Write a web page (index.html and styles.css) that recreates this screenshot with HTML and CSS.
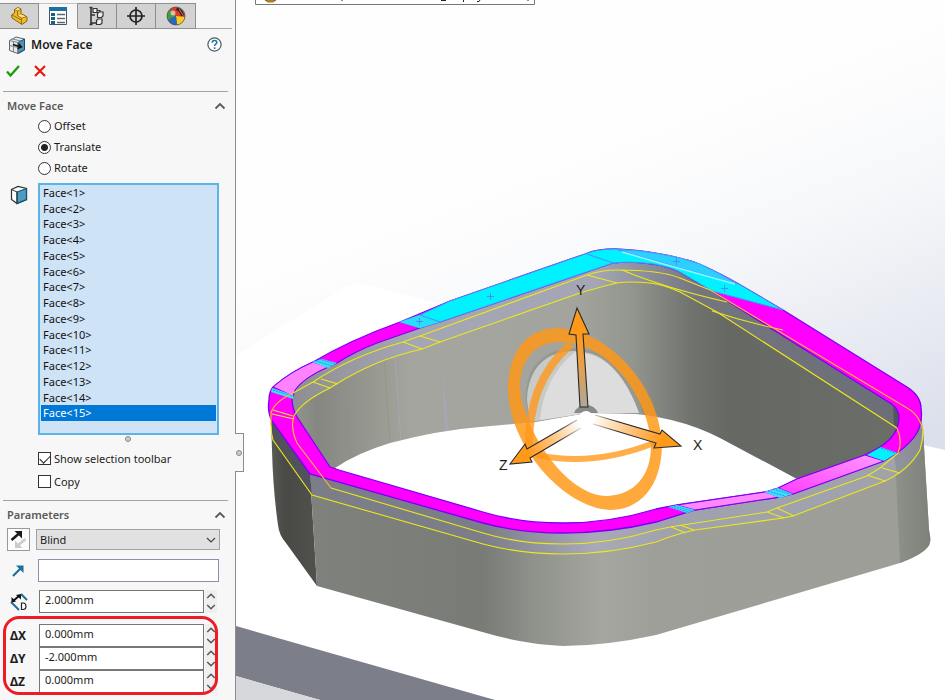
FILE: index.html
```
<!DOCTYPE html>
<html lang="en">
<head>
<meta charset="utf-8">
<title>Move Face</title>
<link rel="stylesheet" href="styles.css">
</head>
<body>
<svg width="0" height="0" class="defs" aria-hidden="true">
  <symbol id="up" viewBox="0 0 12 12"><path d="M1.500 8.500L6 4l4.500 4.500" fill="none" stroke="currentColor" stroke-width="1.800"/></symbol>
  <symbol id="down" viewBox="0 0 12 12"><path d="M1.500 3.500L6 8l4.500-4.500" fill="none" stroke="currentColor" stroke-width="1.800"/></symbol>
</svg>
<aside class="panel">
  <nav class="tabs" aria-label="Managers">
    <button class="tab" aria-label="Feature tree"><svg width="20" height="20" viewBox="0 0 20 20"><path d="M2.500 9l3-2V3.500L9 1.500l3 1.500v5l3 1 3 2v4l-5 3.500L3 12z" fill="#eebb2e" stroke="#8b6410"/><path d="M5.500 3.500L8.500 5v4.500l4 2.500 5-1.500M12.500 12v6M8.500 5L12 3M3 9l9.500 5" fill="none" stroke="#98700f"/><path d="M6.200 3.500L9 2l2.200 1-2.700 1.500zM9.500 9.500l2.500-1 4.500 2-3.500 1z" fill="#ffe98a"/></svg></button>
    <button class="tab active" aria-label="Property manager"><svg width="20" height="20" viewBox="0 0 20 20"><path d="M1.500 1.500h17v17h-17z" fill="#fff" stroke="#456"/><path d="M1 1h18v4H1z" fill="#1f6f9f"/><path d="M3 7h4v3H3zM3 11h4v3H3zM3 15h4v3H3z" fill="#1b5e86"/><path d="M9 8.500h8M9 12.500h8M9 16.500h8" stroke="#5c6a74" stroke-width="1.500"/></svg></button>
    <button class="tab" aria-label="Configurations"><svg width="20" height="20" viewBox="0 0 20 20" fill="#eee" stroke="#333" stroke-width="1.200"><path d="M4 1.500v17M4 9h4M4 17h6M2.500 1.500h3M2.500 18.500h3" fill="none" stroke-width="1.600"/><path d="M6 2.500h4v4H6zM10.500 7.500l1.500-1.500h4v4l-1.500 1.500h-4zM9.500 14.500L11 13h4v4l-1.500 1.500h-4zM10 4.500h3V6"/></svg></button>
    <button class="tab" aria-label="Dimensions"><svg width="20" height="20" viewBox="0 0 20 20" fill="none" stroke="#222" stroke-width="1.700"><circle cx="10" cy="10" r="6"/><path d="M10 1v18M1 10h18"/></svg></button>
    <button class="tab" aria-label="Appearances"><svg width="20" height="20" viewBox="0 0 20 20"><circle cx="10" cy="10" r="9" fill="#e23a22"/><path d="M10 10L2 14A9 9 0 0 1 9 1z" fill="#3f9f3a"/><path d="M9 1a9 9 0 0 0-5 2.500Q6 8 10 10L13 1.500z" fill="#d93b2a"/><path d="M10 10l9 1a9 9 0 0 1-8 8z" fill="#f5cd22"/><path d="M10 10l1 9A9 9 0 0 1 2 14z" fill="#2a66c0"/><path d="M11 2q5 0 7 7l-3 1q-1-5-5-6z" fill="#1d1d1d"/><path d="M13 3l4 6" stroke="#999"/><circle cx="7" cy="7" r="2.500" fill="#fff" opacity=".6"/><circle cx="10" cy="10" r="9" fill="none" stroke="#555" stroke-width=".8"/></svg></button>
  </nav>
  <header class="title">
    <svg width="18" height="18" viewBox="0 0 18 18"><path d="M1.500 4.500L8 1l8.500 2v11L10 17.500l-8.500-3z" fill="#e6eaec" stroke="#5d6870"/><path d="M10 6.500l6.500-3.500v11L10 17.500z" fill="#4c93b8" stroke="#24485c"/><path d="M1.500 4.500l8.500 2v11M4.500 3l8.500 2M5.500 5.500V16M1.500 9.500l8.500 2" fill="none" stroke="#7b868e"/><path d="M5 8.500l8 2.500M10.500 7.500l3 3.500-4 1.500" fill="none" stroke="#111" stroke-width="1.400"/></svg>
    <h1>Move Face</h1>
    <button class="plain" aria-label="Help"><svg width="15" height="15" viewBox="0 0 15 15"><circle cx="7.500" cy="7.500" r="6.600" fill="#fff" stroke="#4e5c66" stroke-width="1.200"/><path d="M5.200 5.800c0-3 4.600-3 4.600-.3 0 1.700-2.200 1.700-2.200 3.500M7.600 10.300v1.700" fill="none" stroke="#1d79aa" stroke-width="1.600"/></svg></button>
  </header>
  <div class="actions">
    <button class="plain" aria-label="OK"><svg width="14" height="12" viewBox="0 0 14 12"><path d="M1 6.500l3.500 4L13 1" fill="none" stroke="#1f9a0d" stroke-width="2.300"/></svg></button>
    <button class="plain" aria-label="Cancel"><svg width="12" height="12" viewBox="0 0 12 12"><path d="M1 1l10 10M11 1L1 11" stroke="#e41b0c" stroke-width="2.200"/></svg></button>
  </div>

  <section class="group">
    <div class="head"><h2>Move Face</h2><button class="plain" aria-label="Collapse Move Face"><svg width="12" height="12"><use href="#up"/></svg></button></div>
    <div class="options">
      <label><input type="radio" name="mode">Offset</label>
      <label><input type="radio" name="mode" checked>Translate</label>
      <label><input type="radio" name="mode">Rotate</label>
    </div>
    <div class="faces">
      <svg width="18" height="20" viewBox="0 0 18 20"><path d="M1.500 4.500L8 1.500l8.500 2v11L7 18.500l-5.500-4z" fill="#fff" stroke="#26323a" stroke-width="1.200"/><path d="M7 7l9.500-3.500v11l-9.500 4z" fill="#4a9cc2" stroke="#214e66" stroke-width="1.200"/><path d="M1.500 4.500L7 7v11" fill="none" stroke="#26323a"/></svg>
      <ul class="list" role="listbox" aria-label="Faces to move">
        <li role="option">Face&lt;1&gt;</li><li role="option">Face&lt;2&gt;</li><li role="option">Face&lt;3&gt;</li><li role="option">Face&lt;4&gt;</li><li role="option">Face&lt;5&gt;</li><li role="option">Face&lt;6&gt;</li><li role="option">Face&lt;7&gt;</li><li role="option">Face&lt;8&gt;</li><li role="option">Face&lt;9&gt;</li><li role="option">Face&lt;10&gt;</li><li role="option">Face&lt;11&gt;</li><li role="option">Face&lt;12&gt;</li><li role="option">Face&lt;13&gt;</li><li role="option">Face&lt;14&gt;</li><li role="option" class="picked" aria-selected="true">Face&lt;15&gt;</li>
      </ul>
    </div>
    <div class="handle"><i class="dot"></i></div>
    <div class="checks">
      <label><input type="checkbox" checked>Show selection toolbar</label>
      <label><input type="checkbox">Copy</label>
    </div>
  </section>

  <section class="group">
    <div class="head"><h2>Parameters</h2><button class="plain" aria-label="Collapse Parameters"><svg width="12" height="12"><use href="#up"/></svg></button></div>
    <div class="end">
      <button class="flip" aria-label="Reverse direction"><svg width="17" height="19" viewBox="0 0 17 19"><path d="M1.500 10l7-6" fill="none" stroke="#1b1b1b" stroke-width="2.600"/><path d="M4.500 1H12v7.500L9.500 6 7 3.500z" fill="#1b1b1b"/><path d="M15.500 9l-7 6" fill="none" stroke="#cbcbcb" stroke-width="2.600"/><path d="M5 10.500V18h7.500L10 15.500 7.500 13z" fill="#cbcbcb"/></svg></button>
      <div class="combo"><select aria-label="End condition"><option>Blind</option></select><svg width="12" height="12" viewBox="0 0 12 12"><path d="M2 4l4 4 4-4" fill="none" stroke="#444" stroke-width="1.200"/></svg></div>
    </div>
    <div class="direction">
      <label for="dir" aria-label="Direction"><svg width="13" height="13" viewBox="0 0 13 13"><path d="M1 12l8-8" fill="none" stroke="#1d6f99" stroke-width="2.200"/><path d="M4 1.500h7.500V9L9 6.500 6.500 4z" fill="#1d6f99"/></svg></label>
      <input id="dir" type="text">
    </div>
    <div class="value first">
      <label for="dist" aria-label="Distance"><svg width="18" height="18" viewBox="0 0 18 18"><path d="M1 9l8 8M11 1l6 6" stroke="#1d6f99" stroke-width="2"/><path d="M3 8l6-5" stroke="#111" stroke-width="2"/><path d="M1.500 9.500V4L6 8.500zM11 1v5.500L6 2z" fill="#111"/><path d="M11.500 10v6.500h1.300c4.200 0 4.200-6.500 0-6.500z" fill="#fff" stroke="#222" stroke-width="1.200"/></svg></label>
      <input id="dist" type="text" value="2.000mm">
      <span class="spin"><button aria-label="Increase distance"><svg width="10" height="10"><use href="#up"/></svg></button><button aria-label="Decrease distance"><svg width="10" height="10"><use href="#down"/></svg></button></span>
    </div>
    <div class="deltas">
      <div class="value"><label for="dx">ΔX</label><input id="dx" type="text" value="0.000mm"><span class="spin"><button aria-label="Increase X"><svg width="10" height="10"><use href="#up"/></svg></button><button aria-label="Decrease X"><svg width="10" height="10"><use href="#down"/></svg></button></span></div>
      <div class="value"><label for="dy">ΔY</label><input id="dy" type="text" value="-2.000mm"><span class="spin"><button aria-label="Increase Y"><svg width="10" height="10"><use href="#up"/></svg></button><button aria-label="Decrease Y"><svg width="10" height="10"><use href="#down"/></svg></button></span></div>
      <div class="value"><label for="dz">ΔZ</label><input id="dz" type="text" value="0.000mm"><span class="spin"><button aria-label="Increase Z"><svg width="10" height="10"><use href="#up"/></svg></button><button aria-label="Decrease Z"><svg width="10" height="10"><use href="#down"/></svg></button></span></div>
      <span class="callout"></span>
    </div>
  </section>
  <span class="grip"><i class="dot"></i></span>
</aside>

<main class="view">
<svg class="scene" viewBox="236 0 709 700" preserveAspectRatio="xMinYMin slice" role="img" aria-label="Part preview">
  <defs>
    <linearGradient id="sky" gradientUnits="userSpaceOnUse" x1="660" y1="120" x2="800" y2="490"><stop offset="0" stop-color="#fefefe"/><stop offset=".35" stop-color="#f7f8fa"/><stop offset="1" stop-color="#dbdfeb"/></linearGradient>
    <linearGradient id="inner" gradientUnits="userSpaceOnUse" x1="290" y1="0" x2="900" y2="0"><stop offset="0" stop-color="#94968f"/><stop offset=".045" stop-color="#858780"/><stop offset=".14" stop-color="#989a92"/><stop offset=".155" stop-color="#9b9d95"/><stop offset=".2" stop-color="#a3a59e"/><stop offset=".47" stop-color="#a2a49d"/><stop offset=".56" stop-color="#93958f"/><stop offset=".66" stop-color="#70726d"/><stop offset=".72" stop-color="#666864"/><stop offset="1" stop-color="#6b6d69"/></linearGradient>
    <linearGradient id="innerBand" gradientUnits="userSpaceOnUse" x1="290" y1="0" x2="900" y2="0"><stop offset="0" stop-color="#8c8e90"/><stop offset=".2" stop-color="#a5a6b4"/><stop offset=".5" stop-color="#a5a6b5"/><stop offset=".67" stop-color="#73757f"/><stop offset="1" stop-color="#6b6e77"/></linearGradient>
    <linearGradient id="outer" gradientUnits="userSpaceOnUse" x1="310" y1="0" x2="930" y2="0"><stop offset="0" stop-color="#7f817c"/><stop offset=".28" stop-color="#797b77"/><stop offset=".36" stop-color="#8f918b"/><stop offset=".47" stop-color="#a4a69f"/><stop offset=".56" stop-color="#9d9f98"/><stop offset=".95" stop-color="#9c9e97"/><stop offset="1" stop-color="#9c9e97"/></linearGradient>
    <linearGradient id="corner" gradientUnits="userSpaceOnUse" x1="894" y1="0" x2="930" y2="0"><stop offset="0" stop-color="#8f918b"/><stop offset="1" stop-color="#7e807a"/></linearGradient>
    <linearGradient id="outerBand" gradientUnits="userSpaceOnUse" x1="310" y1="0" x2="930" y2="0"><stop offset="0" stop-color="#7b7d88"/><stop offset=".28" stop-color="#7b7e89"/><stop offset=".46" stop-color="#a8aab9"/><stop offset=".58" stop-color="#9fa1ae"/><stop offset=".95" stop-color="#a0a2ac"/><stop offset="1" stop-color="#888a90"/></linearGradient>
    <linearGradient id="dark" x1="0" y1="0" x2="1" y2="0"><stop offset="0" stop-color="#5a5a56"/><stop offset=".3" stop-color="#494946"/><stop offset="1" stop-color="#50504d"/></linearGradient>
    <linearGradient id="pink" x1="0" y1="1" x2="1" y2="0"><stop offset="0" stop-color="#ff3cff"/><stop offset="1" stop-color="#ff9aff"/></linearGradient>
    <linearGradient id="ay" gradientUnits="userSpaceOnUse" x1="578" y1="335" x2="586" y2="408"><stop offset="0" stop-color="#ff9a19"/><stop offset=".4" stop-color="#e8a04a"/><stop offset="1" stop-color="#aaa79c"/></linearGradient>
    <linearGradient id="ax" gradientUnits="userSpaceOnUse" x1="662" y1="439" x2="592" y2="419"><stop offset="0" stop-color="#ff9a19"/><stop offset=".45" stop-color="#ffc27c"/><stop offset="1" stop-color="#fff"/></linearGradient>
    <linearGradient id="az" gradientUnits="userSpaceOnUse" x1="528" y1="453" x2="580" y2="423"><stop offset="0" stop-color="#ff9a19"/><stop offset=".45" stop-color="#ffc27c"/><stop offset="1" stop-color="#fff"/></linearGradient>
    <linearGradient id="edge" gradientUnits="userSpaceOnUse" x1="587" y1="0" x2="650" y2="0"><stop offset="0" stop-color="#292929" stop-opacity="0"/><stop offset=".5" stop-color="#292929"/></linearGradient>
    <linearGradient id="edgeLeft" gradientUnits="userSpaceOnUse" x1="585" y1="0" x2="530" y2="0"><stop offset="0" stop-color="#292929" stop-opacity="0"/><stop offset=".5" stop-color="#292929"/></linearGradient>
  </defs>
  <path d="M236 0H945V700H236z" fill="url(#sky)"/>
  <path d="M236 355L344 288Q352 283 362 284L441 304 923 445 945 450V700H236z" fill="#fff"/>
  <path d="M236 626L495 700H320L236 676z" fill="#7c7e8a"/>
  <path d="M236 676L320 700H236z" fill="#d7d8db"/>

  <!-- inside wall -->
  <path d="M330 467L297 417Q292 409 292 398L295 390Q303 378 328 366L337 361 377 341 440 320 613 261Q630 259 653 262 670 265 680 270L710 288 890 401 904 408 904 436 886 451 865 459 797 481 720 490H400z" fill="url(#inner)"/>
  <path d="M383 340l7 103M330 372l4 85M345 366l5 90" stroke="#8d8f88" stroke-width="1" opacity=".5"/>
  <path d="M395 358l6 82" stroke="#a5a6b6" stroke-width="1"/><path d="M441 358l8 73h-4z" fill="#a5a6b6"/>
  <path d="M292 398L295 390Q303 378 328 366L337 361 377 341 440 320 613 261Q630 259 653 262 670 265 680 270L710 288 890 401Q899 409 899 417L897 428 717 312 680 292Q665 285 650 283 630 281 617 283 600 287 580 293L500 321 440 342 422 349Q397 355 377 363 356 372 338 383L330 388Q301 402 294 416z" fill="url(#innerBand)"/>
  <path d="M893 404l9 8v18l-8-5z" fill="#54565c"/>
  <path d="M335 468Q357 453 390 443 440 430 480 427L523 423 587 413H620Q675 415 720 438L797 479 767 491 672 507 656 511Q610 525 563 525 519 525 483 514L339 472z" fill="#fff"/>

  <!-- outside wall -->
  <path d="M271 420L310 474 317 586 286 543Q279 535 278 525 273 490 272 450z" fill="url(#dark)"/>
  <path d="M310 474L483 521 563 531 656 520 695 508 793 492 897 451 921 418 923 430 929 530Q931 540 930 542 929 552 900 563L656 635Q605 646 563 646 523 644 486 633L317 586z" fill="url(#outer)"/>
  <path d="M895 455L921 418 923 430 929 530Q931 540 930 542 929 552 900 563z" fill="url(#corner)"/>
  <path d="M271 420L310 474 312 495 273 440z" fill="#52525c"/>
  <path d="M310 474L483 521 563 531 656 520 695 508 780 495 793 492 897 451 920 427 921 415 923 437Q922 455 900 473L885 481 793 516 783 518 695 530 656 542Q610 554 563 554 521 554 483 544L312 495z" fill="url(#outerBand)"/>
  <path d="M894 455l3 20 13-12 10-15 2-25z" fill="#85878f" opacity=".55"/>

  <!-- top face -->
  <path fill-rule="evenodd" fill="#f0f" stroke="#7a00f5" stroke-width="1.300" d="M310 474L272 421Q267 412 269 400 269 392 273 387 290 372 313 362 350 340 400 322L450 301 585 254Q597 249 615 249 640 250 660 254 673 256 687 260 700 263 737 283L783 310 907 387Q921 396 921 408 923 421 917 433 910 444 897 453L884 461 793 494 780 497 695 510 656 522Q610 533 563 533 519 533 483 523zM330 467L297 417Q292 409 292 398L295 390Q303 378 328 367L337 363Q356 351 377 343L420 328 440 322 613 263Q630 261 653 264 670 267 680 272L710 290 890 403Q899 409 899 417 899 435 880 447L865 455 797 479 778 488 765 492 677 505 656 509Q610 523 563 523 519 523 483 512L339 470z"/>
  <path fill="#00f2ff" stroke="#4b8df5" d="M400 322L420 315 450 301 585 254Q597 249 615 249 640 250 660 254 673 256 687 260 700 263 737 283L783 310 712 291 680 272Q670 267 653 264 630 261 613 263L440 322 420 328z"/>
  <path fill="#2ad0ff" stroke="#4b9df5" d="M618 250Q640 250 660 254 680 257 700 264 719 273 737 284z"/>
  <path d="M622 252L660 263 735 284" fill="none" stroke="#8cf6ff" stroke-width="1.500"/>
  <path d="M400 322L420 315 440 322 420 328z" fill="#28dffa"/>
  <path d="M420 315l20 7M587 254l29 10M487 296.500h7M490.500 293v7M673 261.500h7M676.500 258v7M721 288.500h7M724.500 285v7M416 321.500h7M419.500 318v7" stroke="#4b8df5" fill="none"/>
  <g stroke="#7a00f5" stroke-width="1"><path d="M273 387Q290 372 313 362L328 367Q303 378 295 390L293 396z" fill="#ff82ff"/><path d="M677 505L765 492 780 497 695 510z" fill="#ff88ff"/><path d="M778 488L797 479 865 455 884 461 793 494z" fill="url(#pink)"/></g>
  <g fill="#35e2fa"><path d="M312 362L322 359 337 363 328 368zM272 388L293 395V399L271 392zM668 507L677 505 695 510 687 513zM764 492L778 488 793 494 780 498z"/><path d="M867 455L881 447 897 453 884 461z" fill="#00f2ff"/></g>
  <g fill="none" stroke="#378fe8" stroke-dasharray="2 1"><path d="M316 361l16 5M319 359l16 5M273 390l19 6M671 507l18 5M674 506l18 5M768 491l17 5M773 489l17 5M881 448l14 5"/></g>

  <g fill="none" stroke="#ece81a" stroke-width="1.100">
    <path d="M271 425Q271 433 273 440L312 495 483 544Q521 554 563 554 610 554 656 542 676 534 695 530L783 518 793 516 885 481Q909 470 920 450 923 440 923 430 M617 270Q602 270 587 275L420 336 403 342Q352 356 313 382L293 393M617 270Q660 270 680 278L710 290"/>
    <path d="M331 488L483 533Q519 544 563 544 610 544 656 530L670 527 767 512 777 508 867 476 880 468 898 453M717 312L680 292Q665 285 650 283 630 281 617 283 600 287 580 293L500 321 440 342 422 349Q397 355 377 363 356 372 338 383L330 388Q301 402 294 416M717 312L897 428"/>
    <path d="M403 342l19 7M420 336l20 6M587 275l30 8M313 382l17 6M321 379l17 5M622 270Q665 288 727 302M712 311Q745 322 783 330M671 527l15 6M680 525l14 5M767 512l17 6M777 508l17 8M867 475l18 6M882 468l18 5M273 410l20 6M272 414l22 5"/>
  </g>
  <path d="M293 393Q274 402 271 413V425M294 416Q290 427 297 443L331 488M710 290L907 408Q919 414 923 430M897 428Q903 441 898 453" fill="none" stroke="#ffb52d" stroke-width="1.200"/>

  <!-- triad -->
  <path d="M578 348C545 347 525 365 526 400L530 423 587 413 643 414C633 378 611 351 578 348z" fill="#969893"/>
  <path d="M575 351C544 351 528 370 527 400L530 422 587 413 639 413C627 379 607 354 583 352z" fill="#c8cac8"/>
  <path d="M575 352Q544 377 540 420L587 413 639 413C627 379 607 357 587 354z" fill="#dcdddc"/>
  <path fill="#ff9717" fill-opacity=".84" fill-rule="evenodd" d="M508 387C509 349 529 328 558 328 612 331 661 390 662 446 661 488 639 510 610 510 565 508 508 447 508 387zM520 387C522 427 565 496 607 496 635 495 651 475 651 446 650 400 610 342 560 342 535 342 520 360 520 387z"/>
  <path d="M571 344Q527 382 529 450" fill="none" stroke="#ff9717" stroke-opacity=".78" stroke-width="8"/>
  <path d="M537 455Q593 467 654 443" fill="none" stroke="#ff9717" stroke-opacity=".78" stroke-width="6"/>
  <path d="M574 413a13 13 0 0 1 24 0" fill="#898b87"/><circle cx="586" cy="418" r="7" fill="#fff"/>
  <g fill="none" stroke-width="1.100"><path d="M577 308L589 334H583L588 407H580L576 335 569 334z" fill="url(#ay)" stroke="#292929"/><path d="M595 415L660 434 662 430 681 446 654 448 656 443 593 424" fill="url(#ax)" stroke="url(#edge)"/><path d="M577 420L527 449 525 444 510 464 532 462 530 458 581 428" fill="url(#az)" stroke="url(#edgeLeft)"/></g>
  <circle cx="586" cy="420" r="8" fill="#fff"/>
  <g class="axis"><text x="576" y="295">Y</text><text x="693" y="450">X</text><text x="499" y="470">Z</text></g>

  <!-- lower edge of the feature breadcrumb -->
  <path d="M255.500 -1V4.500H534.500V-1" fill="#fff" stroke="#777"/>
  <path d="M265 0h11l-3 2h-5z" fill="#d79d21" stroke="#71500d" stroke-width=".8"/>
  <path d="M342 0v1M441 .5h5M463.500 0v2M477 1.500h2l1-1.500M528 0v1" stroke="#222" fill="none"/>
</svg>
</main>
</body>
</html>
```
FILE: styles.css
```
* { box-sizing: border-box; }
body {
  margin: 0;
  display: flex;
  height: 100vh;
  overflow: hidden;
  background: #fff;
  color: #1c1c1c;
  font: 11px/16px "Noto Sans", "Open Sans", sans-serif;
}
button, input, select { font: inherit; color: inherit; margin: 0; }
svg { display: block; flex: none; }
h1, h2, ul { margin: 0; padding: 0; }
.defs { position: absolute; }
.panel {
  position: relative;
  flex: none;
  width: 236px;
  background: #f7f7f7;
  border-right: 1px solid #8c8c8c;
}
.plain { border: 0; padding: 0; background: none; }

.tabs { display: flex; height: 29px; padding-top: 3px; margin-right: 3px; }
.tabs::after { content: ""; flex: 1; border-bottom: 1px solid #a5a5a5; }
.tab {
  width: 39px;
  display: grid;
  place-items: center;
  padding: 0;
  border: 1px solid #8f8f8f;
  border-left: 0;
  background: #d2d2d2;
}
.tab:last-child { width: 40px; }
.tab.active { background: #f7f7f7; border-bottom-color: #f7f7f7; border-top-color: #c4c4c4; }

.title { display: flex; align-items: center; gap: 5px; height: 31px; padding: 0 13px 0 8px; }
.title h1 { flex: 1; font-size: 12px; font-weight: 600; }
.actions { display: flex; align-items: center; gap: 14px; height: 21px; padding-left: 6px; margin-bottom: 10px; }

.group::before { content: ""; display: block; height: 1px; margin: 0 7px 0 3px; background: #a3a3a3; }
.head {
  display: flex;
  align-items: center;
  justify-content: space-between;
  height: 24px;
  padding: 3px 9px 0 7px;
  color: #5a5a5a;
}
.head h2 { font-size: 11px; font-weight: 600; }
.options label, .checks label { display: flex; align-items: center; gap: 3px; height: 21px; padding-left: 38px; }
.options label { height: 20px; }
.options { padding-bottom: 2px; display: grid; row-gap: 1px; }
.checks { padding: 4px 0 7px; }
.checks label { height: 23px; }
input[type="radio"], input[type="checkbox"] {
  appearance: none;
  width: 13px;
  height: 13px;
  border: 1px solid #333;
  background: #fff;
}
input[type="radio"] { border-radius: 50%; }
input[type="radio"]:checked { background: radial-gradient(circle, #222 0 3px, #fff 4px); }
input[type="checkbox"] { display: grid; place-items: center; }
input[type="checkbox"]:checked::after {
  content: "";
  width: 9px;
  height: 5px;
  border: solid #222;
  border-width: 0 0 1px 1px;
  transform: translateY(-1px) rotate(-45deg);
}

.faces { display: flex; gap: 10px; padding: 3px 16px 0 10px; }
.faces svg { margin-top: 2px; }
.list {
  flex: 1;
  display: grid;
  grid-template-rows: repeat(15, 1fr);
  height: 252px;
  padding-bottom: 12px;
  border: 2px solid #5cb3e8;
  background: #cfe3f7;
  list-style: none;
}
.list li { min-height: 0; padding-left: 3px; line-height: 15px; color: #111; }
.list .picked { background: #0078d7; color: #fff; margin: 0 1px; padding-left: 2px; }
.handle { display: grid; place-items: center; height: 8px; padding-left: 21px; }
.dot { width: 6px; height: 6px; border: 1px solid #8b8b8b; border-radius: 50%; background: #ccc; }

.end { display: flex; align-items: center; gap: 6px; margin-top: 3px; padding: 0 15px 0 7px; }
.flip { display: grid; place-items: center; width: 23px; height: 23px; padding: 0; border: 1px solid #999; background: #fcfcfc; }
.combo { position: relative; flex: 1; height: 21px; }
.combo select { appearance: none; width: 100%; height: 100%; padding: 0 3px; border: 1px solid #a2a2a2; border-radius: 0; background: #e1e1e1; }
.combo svg { position: absolute; right: 3px; top: 5px; pointer-events: none; }
.direction { display: flex; align-items: center; margin-top: 8px; padding: 0 16px 0 12px; }
.direction label { width: 26px; }
input[type="text"] { flex: 1; min-width: 0; height: 23px; border: 1px solid #777; border-radius: 0; background: #fff; padding: 0 5px 4px; }
.direction input[type="text"] { border-color: #8c90ac; }
.value { display: flex; align-items: center; height: 23px; padding: 0 18px 0 10px; }
.value label { width: 29px; font-size: 12px; font-weight: 700; padding-top: 1px; }
.first { margin-top: 8px; }
.spin { display: grid; width: 12px; height: 23px; margin-left: 1px; background: #efefef; }
.spin button { display: grid; place-items: center; border: 0; padding: 0; background: none; color: #555; }
.deltas { position: relative; margin-top: 11px; }
.callout {
  position: absolute;
  inset: -8px 17px -2px 3px;
  border: 3px solid #ee1c25;
  border-radius: 16px;
  pointer-events: none;
}
.grip {
  position: absolute;
  top: 433px;
  right: -9px;
  z-index: 1;
  display: grid;
  place-items: center;
  width: 9px;
  height: 39px;
  border: 1px solid #8c8c8c;
  border-left: 0;
  background: #f7f7f7;
}
.view { flex: 1; min-width: 0; }
.scene { width: 100%; height: 100%; }
.axis { font: 14px "Liberation Sans", sans-serif; fill: #1b1b1b; }
```
